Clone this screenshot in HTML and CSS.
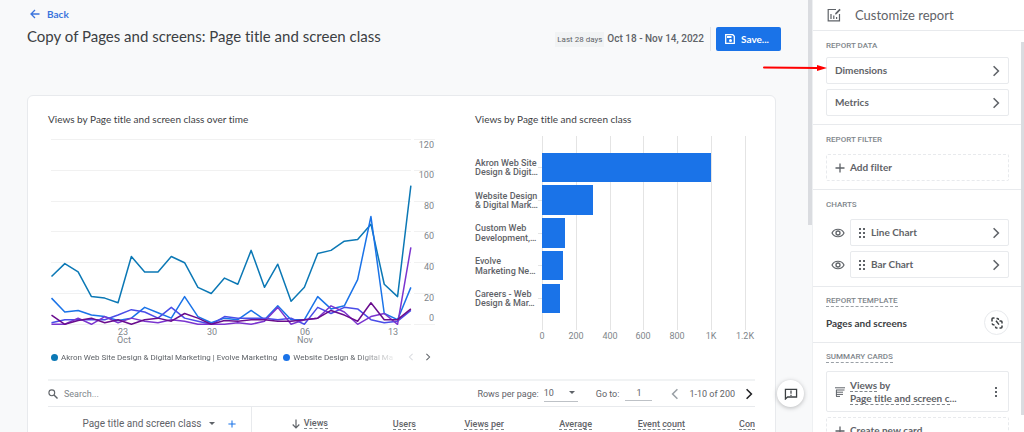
FILE: index.html
```html
<!DOCTYPE html>
<html lang="en">
<head>
<meta charset="utf-8">
<title>Customize report</title>
<link rel="stylesheet" href="styles.css">
</head>
<body>
<svg class="defs" aria-hidden="true">
  <symbol id="chevron" viewBox="0 0 10 10"><path d="M3 1l4 4-4 4" fill="none" stroke="currentColor" stroke-width="1.3"/></symbol>
  <symbol id="chevron-left" viewBox="0 0 10 10"><path d="M7 1L3 5l4 4" fill="none" stroke="currentColor" stroke-width="1.3"/></symbol>
  <symbol id="plus" viewBox="0 0 10 10"><path d="M5 .5v9M.5 5h9" fill="none" stroke="currentColor" stroke-width="1.3"/></symbol>
  <symbol id="eye" viewBox="0 0 14 10"><path d="M1 5c2.400-5 9.600-5 12 0c-2.400 5-9.600 5-12 0z" fill="none" stroke="currentColor" stroke-width="1.200"/><circle cx="7" cy="5" r="2" fill="none" stroke="currentColor" stroke-width="1.300"/></symbol>
  <symbol id="grip" viewBox="0 0 6 10"><path d="M0 0h2v2H0zM4 0h2v2H4zM0 4h2v2H0zM4 4h2v2H4zM0 8h2v2H0zM4 8h2v2H4z" fill="currentColor"/></symbol>
</svg>
<div class="app">
  <main class="main">
    <header class="head">
      <a class="back" href="#"><svg class="icon-m" viewBox="0 0 10 10"><path d="M9.500 5H1.500M5 1L1 5l4 4" fill="none" stroke="currentColor" stroke-width="1.300"/></svg>Back</a>
      <div class="title-row">
        <h1 class="title">Copy of Pages and screens: Page title and screen class</h1>
        <div class="actions">
          <span class="chip">Last 28 days</span>
          <span class="dates">Oct 18 - Nov 14, 2022</span>
          <button class="save" type="button"><svg class="icon-m" viewBox="0 0 10 10"><path d="M1 .7h6.800L9.300 2.200v7.100H.7V.7z" fill="none" stroke="#fff" stroke-width="1.300"/><path d="M2 2h4.500v2H2z" fill="#fff"/><circle cx="5.500" cy="6.600" r="1.500" fill="#fff"/></svg>Save...</button>
        </div>
      </div>
    </header>
    <section class="card">
      <div class="charts">
        <div>
          <h2 class="chart-title">Views by Page title and screen class over time</h2>
          <svg class="chart" viewBox="0 0 388 216" role="img" aria-label="Views over time">
            <path class="grid" d="M3 10.500h360M366 10.500h21M3 41.500h360M366 41.500h21M3 72.500h360M366 72.500h21M3 102.500h360M366 102.500h21M3 133.500h360M366 133.500h21M3 164.500h360M366 164.500h21M3 195.500h360M366 195.500h21"/>
            <g id="lines" class="lines"></g>
            <g class="axis axis-end">
              <text x="386" y="19">120</text><text x="386" y="49">100</text><text x="386" y="80">80</text><text x="386" y="110">60</text><text x="386" y="141">40</text><text x="386" y="172">20</text><text x="386" y="192">0</text>
            </g>
            <g class="axis">
              <text x="75" y="206">23</text><text x="76" y="214">Oct</text><text x="164" y="206">30</text><text x="257" y="206">06</text><text x="257" y="214">Nov</text><text x="345" y="206">13</text>
            </g>
          </svg>
          <div class="legend">
            <div class="legend-items">
              <span class="legend-item"><i class="dot teal"></i>Akron Web Site Design &amp; Digital Marketing | Evolve Marketing</span>
              <span class="legend-item"><i class="dot blue"></i>Website Design &amp; Digital Ma</span>
            </div>
            <button class="plain faint" type="button" aria-label="Previous"><svg class="icon-s"><use href="#chevron-left"/></svg></button>
            <button class="plain" type="button" aria-label="Next"><svg class="icon-s"><use href="#chevron"/></svg></button>
          </div>
        </div>
        <div>
          <h2 class="chart-title">Views by Page title and screen class</h2>
          <svg class="chart" viewBox="0 0 280 216" role="img" aria-label="Views by page title">
            <path class="bar-grid" d="M67.500 7v194M101.500 7v194M135.500 7v194M168.500 7v194M202.500 7v194M236.500 7v194M270.500 7v194"/>
            <path class="bar-grid" d="M63 38.500h4M63 71.500h4M63 104.500h4M63 136.500h4M63 169.500h4"/>
            <path class="bars" d="M67 24h169v29H67zM67 56h51v30H67zM67 89h23v30H67zM67 122h21v29H67zM67 155h18v29H67z"/>
            <g class="names">
              <text x="0" y="37">Akron Web Site</text><text x="0" y="46">Design &amp; Digit…</text>
              <text x="0" y="70">Website Design</text><text x="0" y="79">&amp; Digital Mark…</text>
              <text x="0" y="102">Custom Web</text><text x="0" y="112">Development,…</text>
              <text x="0" y="135">Evolve</text><text x="0" y="145">Marketing Ne…</text>
              <text x="0" y="168">Careers - Web</text><text x="0" y="177">Design &amp; Mar…</text>
            </g>
            <g class="axis">
              <text x="67" y="210">0</text><text x="101" y="210">200</text><text x="135" y="210">400</text><text x="168" y="210">600</text><text x="202" y="210">800</text><text x="236" y="210">1K</text><text x="270" y="210">1.2K</text>
            </g>
          </svg>
        </div>
      </div>
      <div class="toolbar">
        <svg class="icon-m" viewBox="0 0 10 10"><circle cx="3.800" cy="3.800" r="2.900" fill="none" stroke="currentColor" stroke-width="1.100"/><path d="M6 6l3.500 3.500" stroke="currentColor" stroke-width="1.400"/></svg>
        <input class="search" type="text" placeholder="Search..." aria-label="Search">
        <label class="rows" for="rows">Rows per page:</label>
        <span class="select-wrap"><select class="select" id="rows"><option>10</option><option>25</option></select></span>
        <label class="goto" for="goto">Go to:</label>
        <input class="page" id="goto" type="text" value="1">
        <button class="plain pale" type="button" aria-label="Previous page"><svg class="icon-l"><use href="#chevron-left"/></svg></button>
        <span class="range">1-10 of 200</span>
        <button class="plain dark" type="button" aria-label="Next page"><svg class="icon-l"><use href="#chevron"/></svg></button>
      </div>
      <div class="table-wrap">
        <table class="table">
          <colgroup><col class="c-dim"><col class="c-a"><col class="c-b"><col class="c-b"><col class="c-b"><col class="c-c"><col class="c-last"></colgroup>
          <thead><tr>
            <th class="dim"><span class="dim-in"><span>Page title and screen class</span><i class="caret"></i><button class="plain add" type="button" aria-label="Add dimension"><svg class="icon-xs"><use href="#plus"/></svg></button></span></th>
            <th><svg class="sort" viewBox="0 0 8 10"><path d="M4 .5v8M.7 5.500L4 8.800l3.300-3.300" fill="none" stroke="currentColor" stroke-width="1.200"/></svg><span class="dash">Views</span></th>
            <th><span class="dash">Users</span></th>
            <th><span class="dash">Views per</span></th>
            <th><span class="dash">Average</span></th>
            <th><span class="dash">Event count</span></th>
            <th class="last"><span class="dash">Con</span></th>
          </tr></thead>
        </table>
      </div>
    </section>
    <button class="feedback" type="button" aria-label="Send feedback"><svg viewBox="0 0 16 14"><path d="M1.500 1.500h13v9H4l-2.500 2.300z" fill="none" stroke="currentColor" stroke-width="1.500"/><path d="M8 3v3.600M8 8v1.300" stroke="currentColor" stroke-width="1.400"/></svg></button>
  </main>
  <div class="rail"><div class="rail-thumb"></div></div>
  <aside class="side">
    <header class="side-head">
      <svg class="side-icon" viewBox="0 0 14 14"><path d="M9 1.500H1.200v11.300h11.300V6" fill="none" stroke="currentColor" stroke-width="1.200"/><path d="M4 6v5M6.800 7.500V11M9.600 9v2" stroke="currentColor" stroke-width="1.200"/><path d="M8 6.500l.3-1.500 4.200-4.200 1.200 1.200L9.500 6.200z" fill="currentColor"/></svg>
      <h2 class="side-title">Customize report</h2>
    </header>
    <div class="side-body">
      <section class="sec">
        <h3 class="label">REPORT DATA</h3>
        <div class="stack near">
          <button class="item" type="button"><span class="grow">Dimensions</span><svg class="icon-l"><use href="#chevron"/></svg></button>
          <button class="item" type="button"><span class="grow">Metrics</span><svg class="icon-l"><use href="#chevron"/></svg></button>
        </div>
      </section>
      <section class="sec">
        <h3 class="label">REPORT FILTER</h3>
        <div class="stack"><button class="item dashed" type="button"><svg class="icon-m"><use href="#plus"/></svg><span>Add filter</span></button></div>
      </section>
      <section class="sec">
        <h3 class="label">CHARTS</h3>
        <div class="stack">
          <div class="chart-row"><button class="plain" type="button" aria-label="Toggle line chart"><svg class="eye"><use href="#eye"/></svg></button><button class="item" type="button"><svg class="grip"><use href="#grip"/></svg><span class="grow">Line Chart</span><svg class="icon-l"><use href="#chevron"/></svg></button></div>
          <div class="chart-row"><button class="plain" type="button" aria-label="Toggle bar chart"><svg class="eye"><use href="#eye"/></svg></button><button class="item" type="button"><svg class="grip"><use href="#grip"/></svg><span class="grow">Bar Chart</span><svg class="icon-l"><use href="#chevron"/></svg></button></div>
        </div>
      </section>
      <section class="sec template">
        <h3 class="label dotted">REPORT TEMPLATE</h3>
        <div class="template-row"><span class="grow">Pages and screens</span><button class="round" type="button" aria-label="Unlink template"><svg viewBox="0 0 12 12"><path d="M1 4.500V2q0-1 1-1h1.500M5.500 1.500h1Q7.500 1.500 7.500 3M1 6.500Q1.500 8 3.500 8M5 3.800L8 7.600M8.500 4H10q1 0 1 1v1.500M11 8.500V10q0 1-1 1H8.500M6.500 11h-1q-1 0-1-1.500" fill="none" stroke="currentColor" stroke-width="1.500"/></svg></button></div>
      </section>
      <section class="sec">
        <h3 class="label dotted">SUMMARY CARDS</h3>
        <div class="stack">
          <div class="item summary"><svg class="icon-m" viewBox="0 0 10 10"><path d="M0 .8h10M1 3h8.500M1 5.200h7M1 7.400h7M1 9.400h4M1.400 3v6" fill="none" stroke="currentColor" stroke-width="1"/></svg><span class="grow"><span class="dash">Views</span> by<br><span class="dash">Page title and screen c</span>...</span><button class="plain" type="button" aria-label="More"><svg class="more" viewBox="0 0 4 10"><path d="M1 0h2v2H1zM1 4h2v2H1zM1 8h2v2H1z" fill="currentColor"/></svg></button></div>
          <button class="item dashed" type="button"><svg class="icon-m"><use href="#plus"/></svg><span>Create new card</span></button>
        </div>
      </section>
      <div class="side-thumb"></div>
    </div>
  </aside>
  <svg class="arrow" viewBox="0 0 64 8" aria-hidden="true"><path d="M1 3.500L54 4" stroke="#f00" stroke-width="2" stroke-linecap="round"/><path d="M54 1l10 3-10 3z" fill="#f00"/></svg>
</div>
<script src="charts.js"></script>
</body>
</html>
```

FILE: styles.css
```css
* { box-sizing: border-box; }
body { margin: 0; font-family: Roboto, "Noto Sans", sans-serif; font-size: 9px; font-variant-ligatures: none; color: #5f6368; background: #f8f9fa; }
h1, h2, h3 { margin: 0; font-weight: 400; }
button, input, select { font: inherit; color: inherit; }
button { cursor: pointer; }
svg { display: block; flex: none; }
.defs { position: absolute; width: 0; height: 0; }

.app { position: relative; display: flex; height: 100vh; overflow: hidden; }
.main { position: relative; flex: 1; min-width: 0; padding: 0 32px 0 27px; overflow: hidden; }
.rail { flex: none; width: 5px; }
.rail-thumb { width: 4px; height: 52vh; background: #dadce0; }

.icon-xs { width: 8px; height: 8px; }
.icon-s { width: 8px; height: 10px; }
.icon-m { width: 10px; height: 10px; }
.icon-l { width: 12px; height: 12px; }
.plain { display: inline-flex; padding: 0; border: 0; background: none; }
.grow { flex: 1; }

.head { height: 95px; padding-top: 8px; }
.back { display: inline-flex; align-items: center; gap: 7px; padding-left: 3px; font-family: Lato, sans-serif; font-size: 10px; line-height: 12px; font-weight: 700; color: #3b74dd; text-decoration: none; }
.title-row { display: flex; justify-content: space-between; margin-top: 5px; margin-right: -5px; }
.title { font-family: Lato, sans-serif; font-size: 15px; line-height: 20px; color: #3c4043; }
.actions { display: flex; align-items: center; height: 24px; margin-top: 1px; }
.chip { padding: 0 2px; font-size: 8px; line-height: 15px; background: #f1f3f4; }
.dates { margin-left: 3px; padding-right: 6px; font-size: 10px; line-height: 24px; font-weight: 500; border-right: 1px solid #e3e5e8; }
.save { display: flex; align-items: center; gap: 6px; width: 65px; height: 24px; margin-left: 5px; padding: 0 9px; border: 0; border-radius: 2px; background: #1a73e8; color: #fff; font-family: Lato, sans-serif; font-size: 10px; font-weight: 700; }

.card { height: 100%; padding: 17px 20px 0; border: 1px solid #e8eaed; border-radius: 6px; background: #fff; }
.charts { display: grid; grid-template-columns: minmax(0, 388fr) minmax(0, 280fr); gap: 39px; }
.chart-title { height: 13px; font-family: Lato, sans-serif; font-size: 10px; line-height: 13px; color: #3c4043; white-space: nowrap; }
.chart { width: 100%; height: auto; margin-top: 3px; overflow: visible; }
.grid { stroke: #f1f1f1; }
.bar-grid { stroke: #e4e4e4; }
.bars { fill: #1a73e8; }
.lines { fill: none; stroke-width: 1.5px; stroke-linejoin: round; }
.axis { font-size: 9px; fill: #80868b; text-anchor: middle; }
.axis-end { text-anchor: end; }
.names { font-size: 9px; font-weight: 500; fill: #5f6368; }
.legend { display: flex; align-items: center; gap: 9px; height: 14px; margin-top: 5px; padding: 0 4px 0 3px; }
.legend-items { display: flex; flex: 1; min-width: 0; gap: 6px; overflow: hidden; font-size: 8px; white-space: nowrap; mask-image: linear-gradient(to right, #000 88%, transparent); }
.legend-item { display: inline-flex; align-items: center; gap: 3px; }
.dot { width: 7px; height: 7px; border-radius: 50%; }
.teal { background: #0b78b5; }
.blue { background: #1a73e8; }
.faint { color: #dadce0; }
.pale { color: #9aa0a6; }
.dark { color: #202124; }

.toolbar { display: flex; align-items: center; height: 28px; margin-top: 15px; border-top: 2px solid #f1f3f4; border-bottom: 1px solid #e8eaed; white-space: nowrap; }
.search { flex: 1; min-width: 0; margin-left: 6px; padding: 0; border: 0; background: none; outline: 0; }
.search::placeholder { color: #80868b; opacity: 1; }
.select-wrap { position: relative; margin-left: 5px; }
.select-wrap::after { content: ""; position: absolute; right: 3px; top: 6px; border: 3px solid transparent; border-top-color: #5f6368; pointer-events: none; }
.select { display: block; width: 34px; height: 17px; padding: 0; border: 0; border-bottom: 1px solid #bdc1c6; border-radius: 0; background: none; appearance: none; }
.goto { margin-left: 18px; }
.page { width: 27px; height: 15px; margin: 0 17px 0 6px; padding: 0; border: 0; border-bottom: 1px solid #bdc1c6; background: none; text-align: center; }
.range { margin: 0 8px; }
.table-wrap { overflow: hidden; }
.table { width: 100%; table-layout: fixed; border-collapse: collapse; }
.c-dim { width: 203px; }
.c-a { width: 86px; }
.c-b { width: 88px; }
.c-c { width: 93px; }
.table th { height: 33px; padding: 0 9px 0 0; font-size: 9px; font-weight: 500; text-align: right; white-space: nowrap; }
.table .dim { padding-right: 15px; border-right: 1px solid #e8eaed; font-size: 10px; font-weight: 400; }
.table .last { padding: 0; }
.dim-in { display: flex; align-items: center; justify-content: flex-end; }
.caret { margin: 3px 13px 0 7px; border: 3px solid transparent; border-top-color: #5f6368; }
.add { color: #1a73e8; }
.sort { display: inline-block; width: 8px; height: 10px; margin-right: 4px; vertical-align: middle; }
.dash { border-bottom: 1px dashed #80868b; }
.feedback { position: absolute; right: 4px; bottom: 25px; display: flex; align-items: center; justify-content: center; width: 27px; height: 27px; padding: 0; border: 0; border-radius: 50%; background: #fff; box-shadow: 0 1px 4px rgba(60, 64, 67, .35); color: #3c4043; }
.feedback svg { width: 14px; height: 12px; }

.side { display: flex; flex-direction: column; flex: none; width: 211px; background: #fff; box-shadow: 0 0 1px #bdc1c6; font-family: Lato, sans-serif; }
.side-head { display: flex; flex: none; align-items: center; gap: 14px; height: 31px; padding: 0 14px; border-bottom: 1px solid #e8eaed; }
.side-icon { width: 14px; height: 14px; }
.side-title { font-size: 13px; line-height: 28px; }
.side-body { position: relative; flex: 1; min-height: 0; overflow: hidden; }
.side-thumb { position: absolute; top: 11px; right: 0; width: 3px; height: 93%; background: #dadce0; }
.sec { padding: 8px 15px 8px 13px; border-bottom: 1px solid #e8eaed; }
.label { font-family: Roboto, sans-serif; font-size: 8px; line-height: 13px; font-weight: 500; color: #80868b; }
.dotted { display: table; line-height: 11px; border-bottom: 1px dashed #9aa0a6; }
.stack { display: flex; flex-direction: column; gap: 5px; margin-top: 8px; }
.near { margin-top: 5px; }
.item { display: flex; flex: 1; align-items: center; gap: 5px; min-height: 27px; padding: 0 6px 0 8px; border: 1px solid #e8eaed; border-radius: 2px; background: #fff; font-size: 10px; line-height: 13px; font-weight: 700; text-align: left; color: #5f6368; }
.dashed { border-style: dashed; }
.chart-row { display: flex; align-items: center; padding-left: 5px; gap: 5px; }
.eye { width: 14px; height: 10px; }
.grip { width: 6px; height: 10px; margin-right: 1px; }
.template { padding-bottom: 7px; }
.template-row { display: flex; align-items: center; margin-top: 3px; font-size: 10px; font-weight: 700; color: #3c4043; }
.round { display: flex; align-items: center; justify-content: center; width: 25px; height: 25px; padding: 0; border: 1px solid #e8eaed; border-radius: 50%; background: #fff; }
.round svg { width: 12px; height: 12px; }
.summary { min-height: 41px; }
.more { width: 4px; height: 10px; margin-right: 4px; }

.arrow { position: absolute; top: 64px; right: 197px; width: 64px; height: 8px; }
```

FILE: charts.js
```js
const series = [
  ["#0b78b5", [31,39.4,34,18,17,14,44,34,34,44,40,24,20,30,26,48,24,39,15,24,46,48,54,55,65,26,18,90]],
  ["#1a73e8", [17,8,9,6,5,2.5,4,11,7.5,4,18,5,1,4,3,9,3,12,3,3,18,10,12,29,70,7,3,24]],
  ["#4a4de8", [1,3,3,3,3,6,9.5,8,4,11,4,2,0,5,4,4,4,3,4,0,11,7,11,10,3,1,2,9]],
  ["#7b35cf", [0,0,4,0,5,1,4,2,1,3,2,0,0,0,1,0,2,11,0,3,4,12,8,0,5,7,0,50]],
  ["#6a0d8e", [6,0,2.5,4,1,3,0,3,4,2,7,4,0,2.5,2,3,3,2,2,3,4,9,6,2,14,3,3,10]]
];
const group = document.getElementById("lines");
for (const [color, values] of series) {
  const line = document.createElementNS("http://www.w3.org/2000/svg", "polyline");
  line.setAttribute("stroke", color);
  line.setAttribute("points", values.map((v, i) => `${3.5 + i * 13.31},${195.3 - v * 1.54}`).join(" "));
  group.appendChild(line);
}
```
